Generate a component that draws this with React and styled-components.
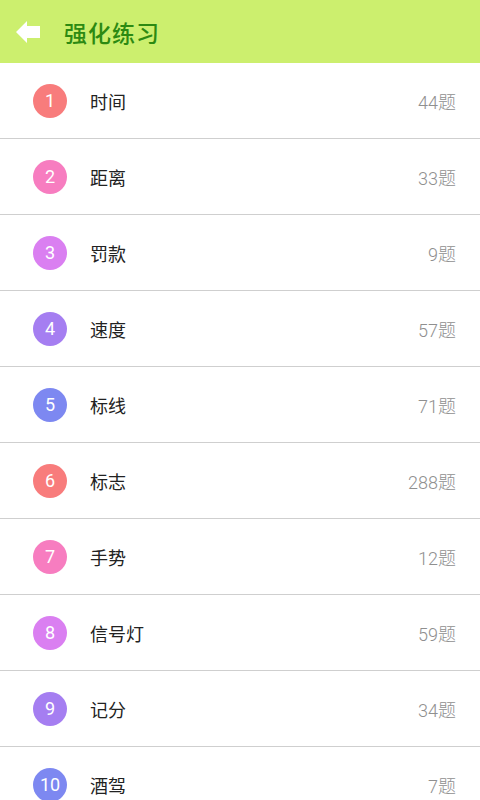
import React from 'react'
import styled, { createGlobalStyle } from 'styled-components'

const Global = createGlobalStyle`
  body {
    margin: 0;
    background: #fff;
    font-family: Roboto, "Noto Sans CJK SC", sans-serif;
  }
`

const Page = styled.div`
  width: 480px;
  height: 800px;
  overflow: hidden;
  background: #fff;
`

const Header = styled.header`
  height: 63px;
  background: #ccef6e;
  display: flex;
  align-items: center;
  padding-left: 16px;
`

const Back = styled.svg`
  width: 26px;
  height: 26px;
  margin-right: 22px;
`

const Title = styled.h1`
  margin: 0;
  font-size: 23px;
  font-weight: 500;
  color: #2c8a12;
  letter-spacing: 1px;
`

const Row = styled.div`
  height: 75px;
  display: flex;
  align-items: center;
  padding: 0 24px 0 33px;
  border-bottom: 1px solid #cfcfcf;
`

const Badge = styled.div`
  width: 34px;
  height: 34px;
  border-radius: 50%;
  background: ${p => p.$color};
  color: #fff;
  font-size: 18px;
  display: flex;
  align-items: center;
  justify-content: center;
  margin-right: 23px;
`

const Label = styled.span`
  flex: 1;
  font-size: 18px;
  color: #222;
`

const Count = styled.span`
  font-size: 18px;
  font-weight: 300;
  color: #8f8f8f;
`

const colors = ['#f87c7c', '#f77dc0', '#da7ff1', '#a57ef1', '#7d88f1']

const items = [
  ['时间', 44],
  ['距离', 33],
  ['罚款', 9],
  ['速度', 57],
  ['标线', 71],
  ['标志', 288],
  ['手势', 12],
  ['信号灯', 59],
  ['记分', 34],
  ['酒驾', 7],
]

export default function App() {
  return (
    <Page>
      <Global />
      <Header>
        <Back viewBox="0 0 26 26">
          <path d="M0 13 L11 2 L11 7 L24 7 L24 19 L11 19 L11 24 Z" fill="#fff" />
        </Back>
        <Title>强化练习</Title>
      </Header>
      {items.map(([name, n], i) => (
        <Row key={name}>
          <Badge $color={colors[i % 5]}>{i + 1}</Badge>
          <Label>{name}</Label>
          <Count>{n}题</Count>
        </Row>
      ))}
    </Page>
  )
}
